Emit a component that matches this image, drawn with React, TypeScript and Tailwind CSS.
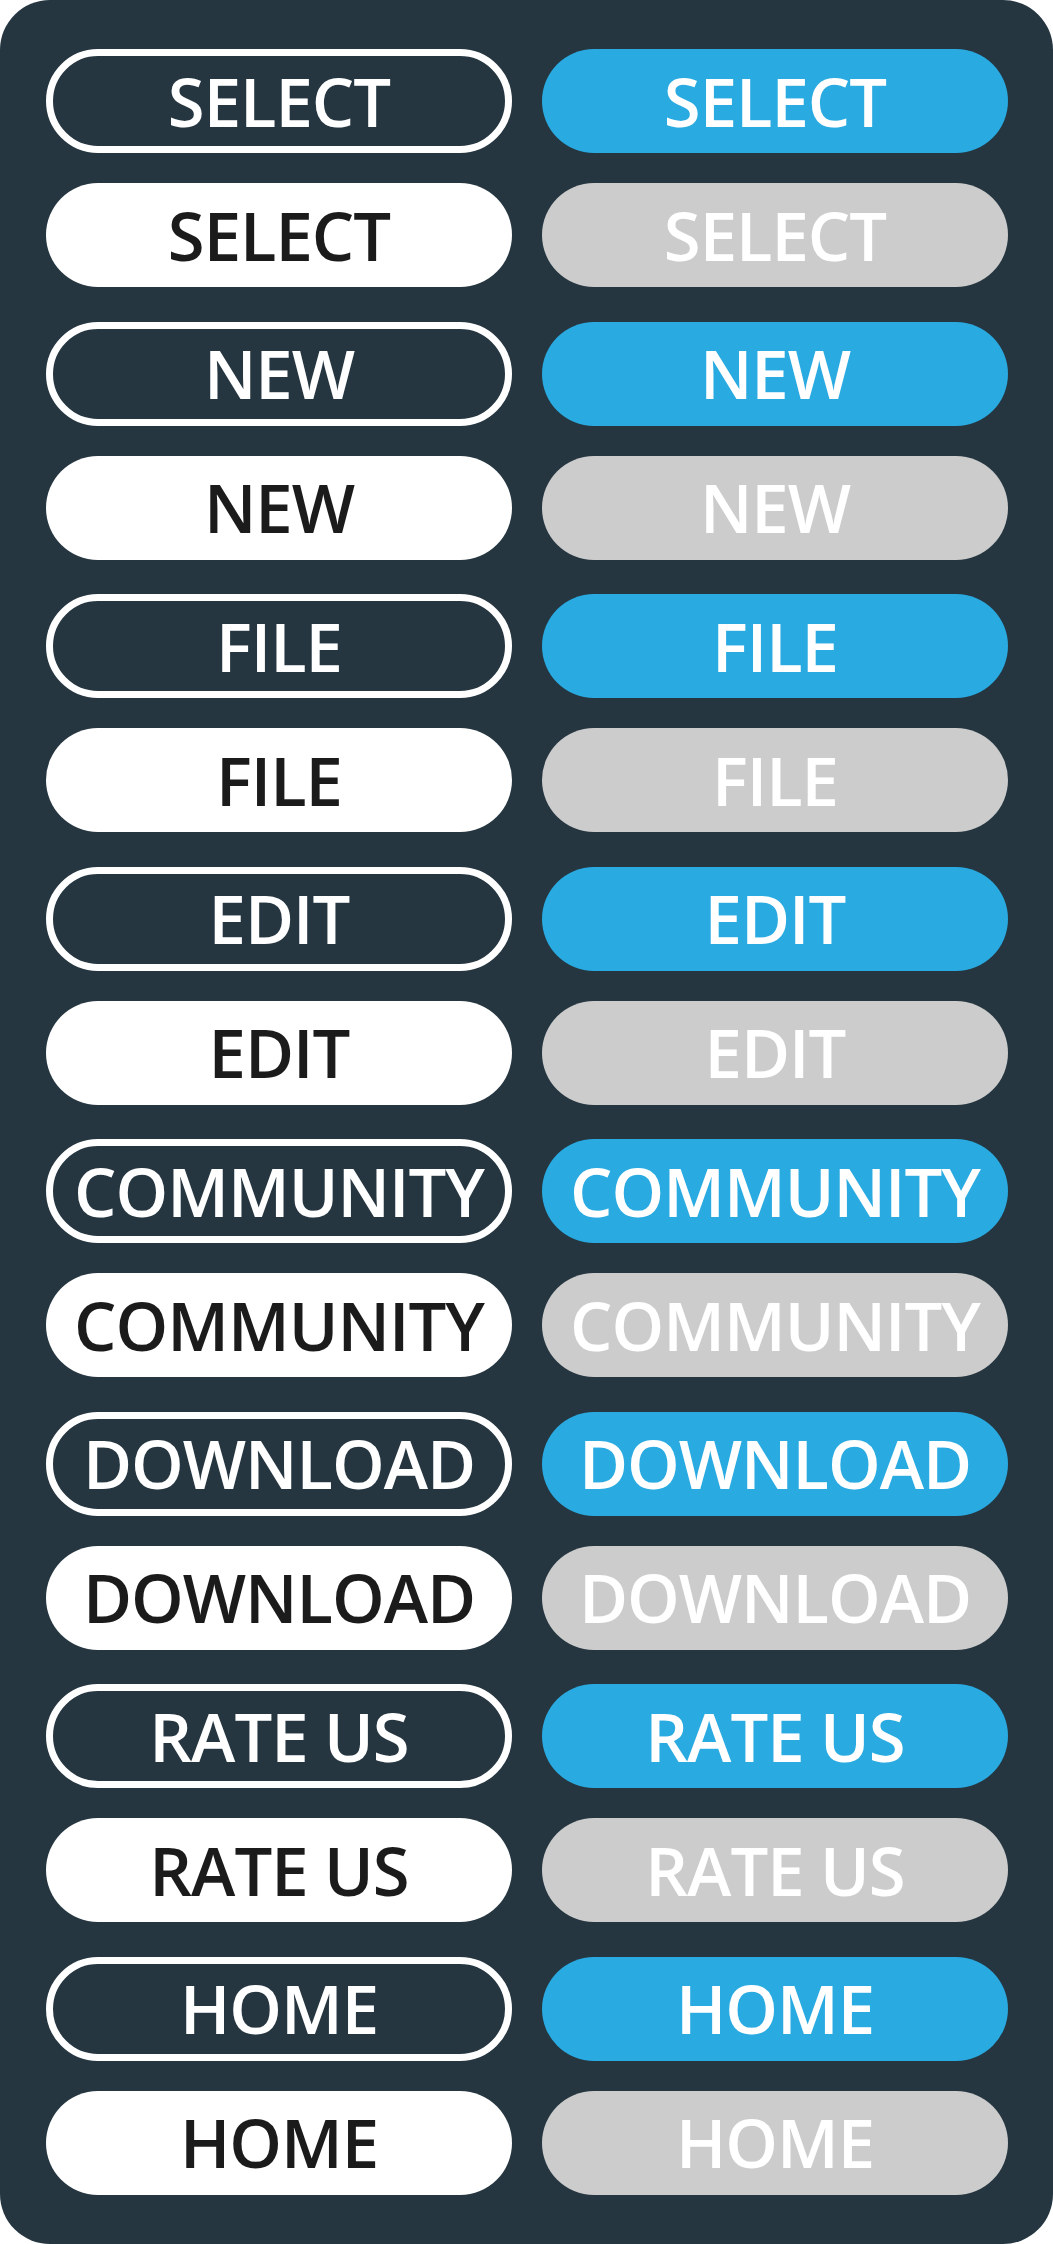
const labels = ['SELECT', 'NEW', 'FILE', 'EDIT', 'COMMUNITY', 'DOWNLOAD', 'RATE US', 'HOME']

const base =
  'flex h-[104px] w-[466px] items-center justify-center rounded-full text-[67px] font-semibold leading-none tracking-[-1px]'

function ButtonPair({ label }: { label: string }) {
  return (
    <div className="flex flex-col gap-[30px]">
      <div className="flex gap-[30px]">
        <button className={`${base} border-[7px] border-white text-white`}>{label}</button>
        <button className={`${base} bg-[#29aae1] text-white`}>{label}</button>
      </div>
      <div className="flex gap-[30px]">
        <button className={`${base} bg-white text-[#1b1b1b]`}>{label}</button>
        <button className={`${base} bg-[#cccccc] text-white`}>{label}</button>
      </div>
    </div>
  )
}

export default function App() {
  return (
    <div className="bg-white" style={{ fontFamily: '"Open Sans", "Noto Sans", sans-serif' }}>
      <div className="flex h-[2244px] w-[1053px] flex-col gap-[34.5px] rounded-[50px] bg-[#253640] pt-[49px] pl-[46px]">
        {labels.map((l) => (
          <ButtonPair key={l} label={l} />
        ))}
      </div>
    </div>
  )
}
